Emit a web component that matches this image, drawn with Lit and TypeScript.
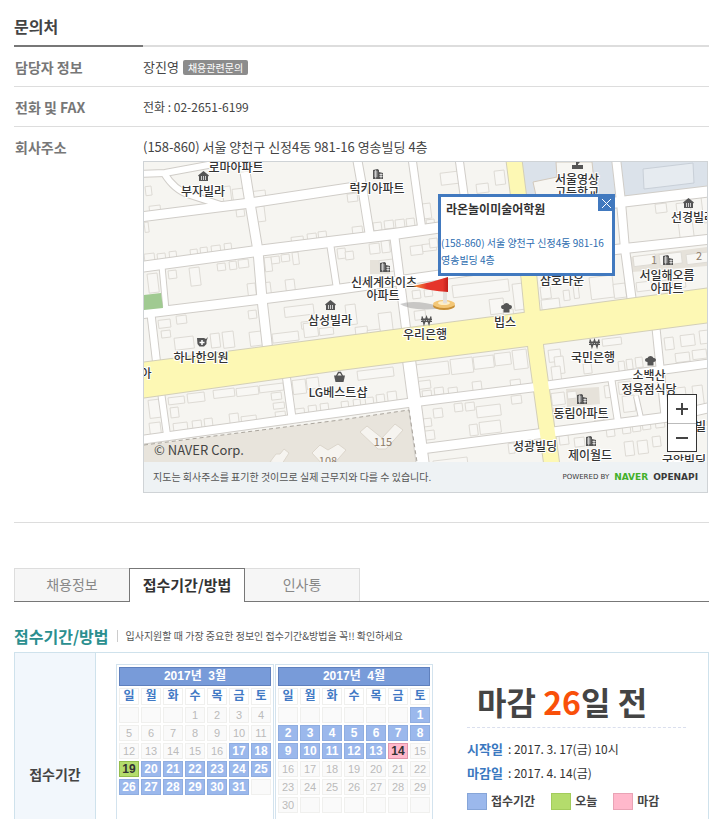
import { LitElement, html, svg, css } from "lit";
import { customElement, property } from "lit/decorators.js";
import { classMap } from "lit/directives/class-map.js";

type IconName = "villa" | "apt" | "bank" | "food" | "basket" | "clinic" | "school";

/* Roads: [path, width] in map coordinates. */
const ROADS: [string, number][] = [
  ["M140 174 L165 173 L208 165 L252 161", 6],
  ["M164 173 Q174 190 190 195 L224 206", 6],
  ["M140 217 L250 203 L362 186", 9],
  ["M140 267 L257 251 L394 234 L443 227 L524 217", 10],
  ["M140 314 L262 299 L340 289 L440 275 L528 263", 9],
  ["M245 172 L250 203 L258 251 L262 299 L268 352", 9],
  ["M357 158 L362 186 L370 236", 8],
  ["M412 158 L422 230", 7],
  ["M459 158 L468 224", 7],
  ["M162 266 L166 310", 5],
  ["M151 314 L157 366", 7],
  ["M330 243 L337 289", 6],
  ["M394 234 L407 336", 8],
  ["M524 213 L620 202 L712 191", 10],
  ["M527 260 L620 249 L712 239", 9],
  ["M616 158 L621 202 L625 249 L632 302", 8],
  ["M161 392 L167 435", 6],
  ["M286 374 L292 418", 7],
  ["M140 440 L292 419 L408 403 L536 387 L712 363", 8],
  ["M409 360 L423 466", 12],
  ["M421 449 L530 435 L668 417 L712 407", 9],
  ["M611 377 L618 422", 6],
  ["M636 396 L641 418", 4],
  ["M656 328 L665 416", 7],
];

const AVENUE = "M140 363 L340 337 L523 313 L710 288 V322 L543 344 L340 370 L140 398 Z";
const CROSS_AVENUE = "M514 160 L529 278 L536 350 L552 466";

/* Building outlines: x, y, width, height. */
const BUILDINGS: number[][] = [
  [145, 186, 6, 9], [149, 205, 11, 5], [222, 186, 8, 18], [232, 188, 12, 12], [252, 190, 13, 6], [236, 209, 8, 7],
  [254, 206, 10, 15], [144, 222, 4, 10], [144, 253, 10, 8], [157, 253, 8, 8], [169, 251, 7, 8], [190, 249, 7, 7],
  [200, 247, 7, 7], [211, 245, 9, 7], [224, 243, 7, 8], [291, 236, 12, 6], [307, 233, 9, 6], [318, 231, 8, 7],
  [147, 273, 10, 19], [168, 270, 8, 8], [189, 267, 10, 18], [217, 263, 8, 7], [229, 261, 7, 8], [238, 259, 10, 8],
  [247, 283, 8, 13], [264, 257, 7, 14], [271, 256, 8, 7], [281, 254, 8, 7], [292, 252, 6, 12], [285, 279, 9, 11],
  [264, 282, 6, 12], [284, 304, 29, 10], [301, 321, 10, 7], [158, 319, 12, 8], [176, 315, 10, 8], [161, 330, 9, 7],
  [174, 336, 19, 12], [210, 333, 9, 14], [222, 331, 11, 16], [249, 331, 12, 14], [272, 331, 26, 9], [303, 322, 14, 14],
  [319, 327, 14, 7], [248, 310, 8, 8], [345, 304, 10, 20], [355, 326, 12, 10], [378, 312, 13, 20], [367, 329, 13, 8],
  [440, 171, 19, 12], [347, 193, 10, 8], [384, 220, 9, 8], [395, 219, 9, 9], [406, 218, 8, 8], [373, 222, 8, 8],
  [352, 226, 10, 7], [420, 203, 10, 15], [426, 219, 8, 8], [369, 243, 10, 10], [381, 240, 8, 12], [379, 259, 14, 12],
  [337, 248, 8, 10], [345, 251, 8, 8], [369, 287, 9, 5], [410, 245, 12, 9], [422, 243, 14, 7], [429, 238, 8, 9],
  [412, 290, 8, 8], [424, 289, 8, 7], [452, 279, 56, 12], [489, 298, 14, 15], [512, 283, 11, 26], [503, 309, 10, 7],
  [414, 310, 11, 9], [476, 183, 12, 9], [494, 170, 10, 14],
  [541, 298, 18, 10], [563, 290, 6, 10], [573, 285, 5, 13], [589, 275, 23, 22], [613, 283, 12, 14], [540, 286, 10, 12],
  [655, 203, 11, 9], [676, 202, 14, 38], [701, 196, 8, 26], [633, 254, 22, 10], [659, 252, 22, 11], [686, 252, 22, 10],
  [636, 281, 15, 9], [655, 280, 13, 9], [672, 279, 13, 8],
  [148, 399, 12, 18], [149, 422, 11, 12], [168, 396, 16, 7], [187, 392, 17, 9], [213, 388, 21, 8], [236, 386, 22, 8],
  [259, 383, 24, 7], [170, 407, 8, 10], [173, 422, 14, 8], [192, 420, 9, 8], [204, 418, 8, 8], [229, 413, 9, 10],
  [241, 415, 15, 5], [271, 392, 10, 7], [273, 402, 11, 6], [275, 411, 10, 7], [292, 379, 13, 14], [306, 377, 12, 11],
  [294, 408, 10, 7], [308, 405, 8, 8], [320, 403, 8, 8], [357, 367, 36, 9], [341, 401, 7, 8], [353, 399, 7, 8],
  [365, 397, 8, 8], [376, 394, 8, 10], [387, 391, 9, 10], [415, 361, 33, 13], [450, 357, 22, 15], [473, 355, 20, 12],
  [494, 352, 16, 12], [512, 349, 14, 19], [418, 380, 12, 8], [422, 390, 9, 7], [434, 387, 9, 7], [448, 387, 9, 6],
  [472, 381, 9, 9], [510, 379, 10, 7], [423, 418, 8, 8], [433, 408, 9, 9], [454, 403, 8, 8], [465, 402, 9, 8],
  [476, 404, 24, 11], [479, 420, 21, 12], [469, 424, 8, 11], [424, 430, 10, 9], [511, 395, 10, 8],
  [548, 349, 12, 12], [554, 356, 9, 17], [551, 366, 9, 14], [583, 363, 8, 10], [602, 337, 19, 7], [618, 361, 6, 10],
  [626, 359, 6, 10], [635, 357, 7, 10], [664, 337, 9, 12], [680, 334, 14, 11], [699, 330, 9, 13], [675, 352, 14, 9],
  [692, 349, 14, 9], [551, 392, 13, 12], [553, 407, 12, 10], [567, 391, 9, 7], [594, 412, 9, 8], [604, 385, 8, 12],
  [618, 381, 12, 12], [622, 395, 12, 16], [675, 387, 10, 9], [692, 385, 10, 20], [606, 427, 8, 9], [622, 425, 8, 8],
  [632, 423, 8, 8], [642, 421, 8, 8], [655, 419, 9, 8], [671, 417, 9, 9], [559, 435, 9, 9], [624, 441, 9, 14],
  [637, 440, 10, 13], [652, 436, 8, 10], [433, 457, 34, 9], [508, 443, 6, 10], [574, 437, 10, 9],
];

/* Place names: text, centre x, baseline y. */
const LABELS: [string, number, number][] = [
  ["로마아파트", 236, 172], ["부자빌라", 203, 196], ["럭키아파트", 377, 193], ["신세계하이츠", 384, 287],
  ["아파트", 383, 300], ["삼성빌라", 330, 325], ["우리은행", 425, 339], ["빕스", 505, 327], ["하나한의원", 201, 362],
  ["아", 146, 378], ["LG베스트샵", 338, 397], ["서울영상", 577, 184], ["고등학교", 577, 197], ["선경빌라", 693, 222],
  ["삼호타운", 562, 285], ["서일해오름", 667, 280], ["아파트", 667, 293], ["국민은행", 593, 362], ["소백산", 649, 380],
  ["정육점식당", 649, 394], ["동림아파트", 581, 418], ["성광빌딩", 535, 451], ["제이월드", 590, 460],
  ["국악빌딩", 684, 465], ["빌딩", 706, 431],
];

/* Place icons: kind, left x, top y. */
const MARKS: [IconName, number, number][] = [
  ["villa", 198, 171], ["apt", 373, 169], ["apt", 380, 262], ["villa", 325, 300], ["bank", 421, 316], ["food", 501, 303],
  ["clinic", 197, 337], ["basket", 334, 372], ["school", 572, 161], ["villa", 683, 198], ["apt", 663, 255],
  ["bank", 589, 339], ["food", 645, 356], ["apt", 577, 394], ["apt", 586, 436],
];

const ICONS: Record<IconName, unknown> = {
  villa: svg`<path d="M5.5 0 L11 4.5 L10 5.5 L10 10 L1 10 L1 5.5 L0 4.5 Z"/><path class="cut" d="M3.5 5v4M5.5 5v4M7.5 5v4"/>`,
  apt: svg`<path d="M0 1 L4.5 0 L6 1 L6 3 L10 4 L10 10 L0 10 Z"/><path class="cut" d="M1 3h3.5M1 5h3.5M1 7h3.500M6.5 5.5h3M6.5 7.5h3M2.7 1v8.5M8 4.5v5"/>`,
  bank: svg`<path class="won" d="M1 0.5 L3 8 L5.5 1 L8 8 L10 0.5 M0 3.2h11M0 5.4h11"/>`,
  food: svg`<path d="M2.5 6 C-1 6 -0.5 1.500 2.5 2 C3.5 -0.8 7.5 -0.8 8.5 2 C11.5 1.500 12 6 8.5 6 L8.5 9.5 L2.5 9.5 Z"/>`,
  basket: svg`<path d="M0 3.5 H11 L9.5 10 H1.5 Z"/><path class="won" d="M2.5 4 L4.5 0.5 H6.5 L8.5 4"/>`,
  clinic: svg`<path d="M0 1 H7 L9 2 L11 0 L9.5 4 V7 L7 9.5 H2.5 L0.5 7 Z"/><path class="cut2" d="M5 3v5M2.5 5.5h5"/>`,
  school: svg`<path d="M0 4 H4 V0 L8 1.5 L6 3 V4 H11 V8 H0 Z"/>`,
};

@customElement("company-map")
class CompanyMap extends LitElement {
  static styles = css`
    :host { display: block; border: 1px solid #cfd3d6; position: relative; }
    .canvas { display: block; width: 100%; height: 300px; background: #f6f5f1; }
    .edge { fill: none; stroke: #d0cdc8; }
    .road { fill: none; stroke: #fff; }
    .main-edge { fill: none; stroke: #d3cfb8; }
    .main { fill: #fdf8b4; }
    .lane { fill: none; stroke: #fdf8b4; }
    .block { fill: #f8f7f4; stroke: #dedbd5; }
    .school { fill: #dbe2ea; }
    .pool { fill: #e6ebf0; stroke: #c9d0d8; }
    .plain { fill: #f7f6f2; stroke: #d2c9bd; }
    .shade { fill: #e6e2da; }
    .estate { fill: #e8e4dc; }
    .fence { fill: none; stroke: #aaa59d; stroke-dasharray: 4 3; }
    .tower { fill: #f6f4f0; stroke: #dcd6cc; }
    .park { fill: #a0ca91; }
    .mark { fill: #555; }
    .cut { stroke: #eee; stroke-width: 0.8; fill: none; }
    .cut2 { stroke: #fff; stroke-width: 1.5; fill: none; }
    .won { stroke: #555; stroke-width: 1.4; fill: none; }
    .place { font: 500 12px "Noto Sans CJK KR", sans-serif; fill: #333; stroke: #fff; stroke-width: 2px; paint-order: stroke; text-anchor: middle; }
    .block-no { font: 11px "Noto Sans CJK KR", sans-serif; fill: #8d7b69; text-anchor: middle; }
    .copy { font: 13px "Noto Sans CJK KR", sans-serif; fill: #444; }
    .popup { position: absolute; left: 294px; top: 32px; width: 177px; height: 82px; box-sizing: border-box; border: 3px solid #4179bf; background: #fff; color: #2c6caf; font-size: 10px; line-height: 17px; }
    .name { margin: 4px 5px 17px; font-size: 12px; line-height: 16px; color: #333; }
    .addr { margin: 0; white-space: nowrap; }
    .close { position: absolute; right: -3px; top: -2px; width: 17px; height: 16px; padding: 0; border: 0; background: #4179bf; }
    .close svg { display: block; margin: auto; stroke: #fff; }
    .zoom { position: absolute; right: 10px; top: 232px; width: 30px; box-sizing: border-box; border: 1px solid #333; background: #fff; }
    .zoom button { display: block; width: 100%; height: 28px; padding: 0; border: 0; background: none; }
    .zoom button + button { border-top: 1px solid #bbb; }
    .zoom svg { display: block; margin: auto; stroke: #444; stroke-width: 2; }
    .foot { display: flex; align-items: center; justify-content: space-between; height: 30px; padding: 0 9px; background: #eef2f4; font-size: 10px; color: #555; }
    .powered { display: flex; align-items: center; gap: 5px; font: bold 9px "DejaVu Sans", sans-serif; color: #3a3a3a; }
    .by { font-size: 7px; font-weight: normal; }
    .naver { color: #43b02a; }
  `;

  render() {
    return html`
      <svg class="canvas" viewBox="144 162 563 300" preserveAspectRatio="xMidYMid slice" role="img" aria-label="약도">
        <path class="school" d="M520 160 H612 L618 198 L524 210 Z M620 160 H710 V187 L625 197 Z" />
        <path class="plain" d="M533 182 L557 177 L556 162 H592 L596 200 H537 Z" />
        <path class="pool" d="M643 169 L693 163 L694 183 L644 189 Z" />
        <path class="shade" d="M370 260 h20 v14 h-20 Z M566 389 L599 387 L600 404 L567 407 Z M630 257 L707 247 V266 L632 272 Z" />
        ${BUILDINGS.map(([x, y, w, h]) => svg`<path class="block" d="M${x} ${y + w * 0.12} l${w} ${-w * 0.12} l${h * 0.12} ${h} l${-w} ${w * 0.12} Z"/>`)}
        <path class="estate" d="M144 445 L340 420 L409 410 L417 462 H144 Z" />
        <path class="tower" d="M360 432 L367 426 L382 438 L395 424 L403 430 L386 449 L378 449 Z M312 453 L320 445 L328 450 L338 444 L346 450 L332 466 H324 Z M270 462 L276 454 L280 454 L284 449 L289 453 L282 464 Z" />
        ${ROADS.map(([d, w]) => svg`<path class="edge" stroke-width=${w + 2} d=${d}/>`)}
        <path class="main-edge" stroke-width="17" d=${CROSS_AVENUE} />
        ${ROADS.map(([d, w]) => svg`<path class="road" stroke-width=${w} d=${d}/>`)}
        <path class="fence" d="M144 445 L340 420 L409 410 L417 462" />
        <path class="park" d="M144 295 L161 293 L163 308 L144 310 Z" />
        <path class="main-edge" stroke-width="2" d=${AVENUE} />
        <path class="main" d=${AVENUE} />
        <path class="lane" stroke-width="15" d=${CROSS_AVENUE} />
        ${MARKS.map(([k, x, y]) => svg`<g class="mark" transform="translate(${x} ${y})">${ICONS[k]}</g>`)}
        ${LABELS.map(([t, x, y]) => svg`<text class="place" x=${x} y=${y}>${t}</text>`)}
        <text class="block-no" x="383" y="446">115</text>
        <text class="block-no" x="328" y="465">108</text>
        <text class="block-no" x="654" y="264">1</text>
        <text class="block-no" x="699" y="260">2</text>
        <text class="copy" x="154" y="455">© NAVER Corp.</text>
        <path d="M400 304 Q415 299 442 307 L436 309 Q410 311 400 304 Z" fill="#999" opacity="0.5" />
        <ellipse cx="444" cy="306" rx="11" ry="4" fill="#c88f35" />
        <ellipse cx="444" cy="304" rx="11" ry="4" fill="#f3c777" />
        <ellipse cx="444" cy="303" rx="6" ry="2" fill="#fdeec6" />
        <path d="M443 278 h4 v25 q-2 1 -4 0 Z" fill="#e3e0dd" />
        <defs>
          <linearGradient id="cloth"><stop offset="0" stop-color="#f6a03a" /><stop offset="0.4" stop-color="#e5352b" /><stop offset="0.85" stop-color="#e5352b" /><stop offset="1" stop-color="#c01f1a" /></linearGradient>
        </defs>
        <path d="M413 286 Q430 283 448 277 V292 Q430 291 413 286 Z" fill="url(#cloth)" />
      </svg>
      <div class="popup">
        <h3 class="name">라온놀이미술어학원</h3>
        <p class="addr">(158-860) 서울 양천구 신정4동 981-16<br />영송빌딩 4층</p>
        <button class="close" aria-label="닫기"><svg width="11" height="11"><path d="M1 1 L10 10 M10 1 L1 10" /></svg></button>
      </div>
      <div class="zoom">
        <button aria-label="확대"><svg width="12" height="12"><path d="M0 6h12M6 0v12" /></svg></button>
        <button aria-label="축소"><svg width="12" height="12"><path d="M0 6h12" /></svg></button>
      </div>
      <div class="foot">
        <span>지도는 회사주소를 표기한 것이므로 실제 근무지와 다를 수 있습니다.</span>
        <span class="powered"><span class="by">POWERED BY</span><span class="naver">NAVER</span><span>OPENAPI</span></span>
      </div>
    `;
  }
}

@customElement("month-calendar")
class MonthCalendar extends LitElement {
  @property() heading = "";
  @property({ type: Number }) offset = 0;
  @property({ type: Number }) days = 30;
  @property({ type: Number }) from = 0;
  @property({ type: Number }) to = 0;
  @property({ type: Number }) today = 0;
  @property({ type: Number }) deadline = 0;

  static styles = css`
    :host { display: block; border: 1px solid #d3e3ee; }
    table { border-collapse: separate; border-spacing: 2px; table-layout: fixed; width: 156px; font: 11px "Liberation Sans", "Noto Sans CJK KR", sans-serif; }
    th, td { box-sizing: border-box; padding: 0; text-align: center; border: 1px solid #f0f0ee; line-height: 14px; height: 16px; overflow: hidden; }
    td { color: #bbb; background: #fafafa; }
    .title { height: 19px; line-height: 17px; background: #789bd9; border-color: #5f80bd; color: #fff; font-size: 12px; white-space: pre; }
    .week { height: 17px; line-height: 15px; color: #4179c4; font-size: 12px; }
    .open, .today, .deadline { font-weight: bold; font-size: 12px; }
    .open { background: #9bb8ec; border-color: #8fade0; color: #fff; }
    .today { background: #b4dc6c; border-color: #94bd4c; color: #333; }
    .deadline { background: #ffb8cb; border-color: #e094a9; color: #333; }
  `;

  render() {
    const rows = Math.ceil((this.offset + this.days) / 7);
    return html`<table>
      <thead>
        <tr><th class="title" colspan="7">${this.heading}</th></tr>
        <tr>${[..."일월화수목금토"].map((d) => html`<th class="week" scope="col">${d}</th>`)}</tr>
      </thead>
      <tbody>
        ${Array.from({ length: rows }, (_, r) => html`<tr>${Array.from({ length: 7 }, (_, c) => {
          const n = r * 7 + c - this.offset + 1;
          const real = n > 0 && n <= this.days;
          const today = real && n === this.today;
          const deadline = real && n === this.deadline;
          const open = real && n >= this.from && n <= this.to && !today && !deadline;
          return html`<td class=${classMap({ open, today, deadline })}>${real ? n : ""}</td>`;
        })}</tr>`)}
      </tbody>
    </table>`;
  }
}

@customElement("app-root")
class AppRoot extends LitElement {
  static styles = css`
    :host { display: block; height: 100vh; overflow: hidden; background: #fff; color: #444; font: 13px/18px "Noto Sans CJK KR", sans-serif; }
    .page { padding: 12px 10px 0 14px; }
    h2, dl, dd, p { margin: 0; }
    .section { font-size: 16px; line-height: 28px; height: 33px; color: #444; }
    .contact { display: grid; grid-template-columns: 129px 1fr; }
    .contact dt, .contact dd { padding: 11px 0 10px; border-bottom: 1px solid #ddd; line-height: 18px; }
    .contact dt { padding-left: 1px; font-size: 14px; font-weight: bold; color: #777; }
    .contact dt:first-of-type { border-top: 2px solid #777; }
    .contact dd:first-of-type { border-top: 2px solid #ddd; }
    .contact dt:last-of-type, .contact dd:last-of-type { border-bottom: 0; padding: 11px 0 0; }
    .contact dt:last-of-type { padding-left: 1px; }
    .person { display: flex; align-items: center; gap: 4px; }
    .badge { padding: 0 5px; border-radius: 2px; background: #8c8c8c; color: #fff; border: 0; font: 10px/15px "Noto Sans CJK KR", sans-serif; }
    .phone { font-size: 12px; }
    .contact company-map { margin: 5px 1px 0 0; }
    .rule { border: 0; border-top: 1px solid #ddd; margin: 29px 0 45px; }
    .tabs { display: flex; border-bottom: 1px solid #777; }
    .tab { width: 116px; height: 33px; margin: 0 -1px 0 0; padding: 0 0 2px; border: 1px solid #ddd; border-bottom: 0; background: #f6f6f6; color: #888; font: 14px "Noto Sans CJK KR", sans-serif; }
    .tab.active { z-index: 1; height: 34px; margin-bottom: -1px; border-color: #777; background: #fff; color: #333; font-weight: bold; font-size: 15px; }
    .intro { display: flex; align-items: center; gap: 8px; height: 32px; padding-top: 18px; }
    .intro h2 { font-size: 16px; line-height: 32px; color: #2b8f8f; }
    .intro p { border-left: 1px solid #ccc; padding-left: 8px; font-size: 10px; line-height: 12px; color: #555; }
    .period { display: flex; height: 244px; box-sizing: border-box; border: 1px solid #cfe2ec; }
    .side { width: 80px; display: flex; align-items: center; justify-content: center; background: #f2f7fc; border-right: 1px solid #cfe2ec; font-size: 14px; font-weight: bold; }
    .months { display: flex; gap: 1px; padding: 11px 0 11px 20px; }
    .status { flex: 1; max-width: 219px; margin-left: 34px; }
    .left { display: block; margin: 24px 0 0; padding: 0 0 2px 10px; border-bottom: 1px dashed #dadfee; font-size: 32px; line-height: 48px; font-weight: bold; color: #444; white-space: nowrap; }
    .left em { font-style: normal; color: #f9500a; }
    .dates { padding: 9px 0 7px; font-size: 12px; line-height: 24px; color: #333; }
    .dates div { display: flex; gap: 5px; }
    .dates dt { font-size: 13px; font-weight: bold; color: #3a78c0; }
    .legend { display: flex; gap: 16px; margin: 0; padding: 0; list-style: none; font-size: 12px; font-weight: bold; white-space: nowrap; }
    .legend li { display: flex; align-items: center; gap: 4px; }
    .swatch { width: 20px; height: 17px; box-sizing: border-box; border: 1px solid #86a5d8; background: #9bb8ec; }
    .swatch.now { background: #b4dc6c; border-color: #a3cc5c; }
    .swatch.end { background: #ffb8cb; border-color: #e9a3b5; }
  `;

  render() {
    return html`<main class="page">
      <h2 class="section">문의처</h2>
      <dl class="contact">
        <dt>담당자 정보</dt>
        <dd class="person">장진영 <button class="badge">채용관련문의</button></dd>
        <dt>전화 및 FAX</dt>
        <dd class="phone">전화 : 02-2651-6199</dd>
        <dt>회사주소</dt>
        <dd>(158-860) 서울 양천구 신정4동 981-16 영송빌딩 4층<company-map></company-map></dd>
      </dl>
      <hr class="rule" />
      <nav class="tabs">
        <button class="tab">채용정보</button>
        <button class="tab active">접수기간/방법</button>
        <button class="tab">인사통</button>
      </nav>
      <header class="intro">
        <h2>접수기간/방법</h2>
        <p>입사지원할 때 가장 중요한 정보인 접수기간&amp;방법을 꼭!! 확인하세요</p>
      </header>
      <section class="period">
        <div class="side">접수기간</div>
        <div class="months">
          <month-calendar heading="2017년  3월" offset="3" days="31" from="17" to="31" today="19"></month-calendar>
          <month-calendar heading="2017년  4월" offset="6" days="30" from="1" to="14" deadline="14"></month-calendar>
        </div>
        <div class="status">
          <strong class="left">마감 <em>26</em>일 전</strong>
          <dl class="dates">
            <div><dt>시작일</dt><dd>: 2017. 3. 17(금) 10시</dd></div>
            <div><dt>마감일</dt><dd>: 2017. 4. 14(금)</dd></div>
          </dl>
          <ul class="legend">
            <li><span class="swatch"></span>접수기간</li>
            <li><span class="swatch now"></span>오늘</li>
            <li><span class="swatch end"></span>마감</li>
          </ul>
        </div>
      </section>
    </main>`;
  }
}
